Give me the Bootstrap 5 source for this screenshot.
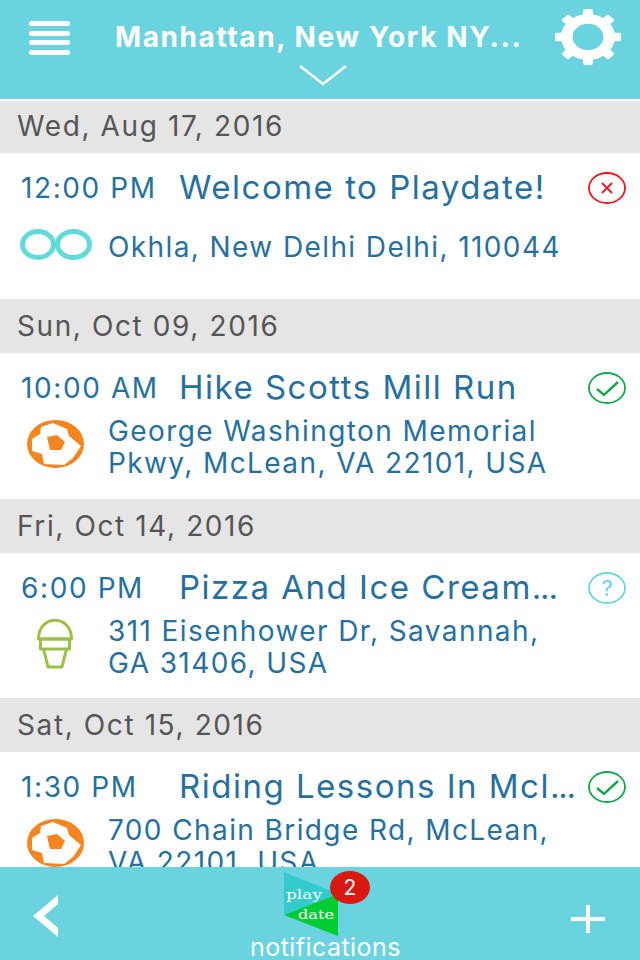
<!DOCTYPE html>
<html lang="en">
  <head>
    <meta charset="UTF-8" />
    <meta name="viewport" content="width=device-width, initial-scale=1.0" />
    <title>Playdate</title>
    <link href="https://cdn.jsdelivr.net/npm/bootstrap@5.3.0/dist/css/bootstrap.min.css" rel="stylesheet" />
    <style>
      body {
        font-family: Inter, "Liberation Sans", Arial, sans-serif;
        background: #fff;
      }
      .app-shell {
        width: 640px;
        height: 960px;
        overflow: hidden;
      }
      .top-bar {
        height: 99px;
        background: #6bd3e0;
        color: #fff;
      }
      .menu-btn {
        width: 115px;
        padding: 21px 0 0 29px;
      }
      .loc-col {
        width: 408px;
      }
      .loc-title {
        font-size: 28px;
        font-weight: 700;
        line-height: 34px;
        letter-spacing: 1.6px;
        margin-top: 20px;
        white-space: nowrap;
      }
      .loc-arrow {
        margin: 11px 0 0 184px;
      }
      .gear-btn {
        padding: 9px 0 0 32px;
      }
      .event-list {
        margin-top: 2px;
        min-height: 0;
      }
      .date-bar {
        height: 54px;
        padding-left: 17px;
        background: #e5e5e5;
        color: #555;
        font-size: 28px;
        line-height: 54px;
        letter-spacing: 1.6px;
      }
      .date-first {
        height: 52px;
        line-height: 50px;
      }
      .event-row {
        height: 146px;
        color: #26709f;
      }
      .event-row-short {
        height: 145px;
      }
      .event-top {
        height: 62px;
        padding-top: 8px;
      }
      .event-time {
        width: 179px;
        padding-left: 21px;
        font-size: 28px;
        letter-spacing: 1.6px;
      }
      .event-title {
        width: 409px;
        font-size: 33px;
        letter-spacing: 1.5px;
        white-space: nowrap;
      }
      .dots-tight {
        letter-spacing: -1.2px;
      }
      .event-place {
        height: 64px;
      }
      .kind-icon {
        width: 108px;
        margin-bottom: 6px;
      }
      .ball-icon {
        margin-left: 27px;
      }
      .loop-icon {
        margin-left: 20px;
      }
      .cone-icon {
        margin-left: 37px;
      }
      .place-text {
        font-size: 28px;
        line-height: 32px;
        letter-spacing: 1.4px;
      }
      .bottom-bar {
        height: 93px;
        background: #6bd3e0;
        color: #fff;
      }
      .back-btn {
        padding: 28px 0 0 33px;
        width: 243px;
      }
      .notif-col {
        width: 230px;
      }
      .logo-wrap {
        width: 100px;
        height: 64px;
        margin: 5px 0 0 41px;
      }
      .notif-badge {
        position: absolute;
        left: 46px;
        top: -1px;
        width: 40px;
        height: 33px;
        border-radius: 50%;
        background: #d9190f;
        font-size: 21px;
        line-height: 33px;
        text-align: center;
      }
      .notif-label {
        font-size: 25px;
        line-height: 22px;
        letter-spacing: 0.45px;
        margin-left: 7px;
      }
      .add-btn {
        padding: 38px 0 0 98px;
      }
      .logo-word {
        font-family: "DejaVu Serif", "Liberation Serif", serif;
        font-size: 13px;
        fill: #fff;
      }
      .status-mark {
        font-size: 22px;
      }
    </style>
  </head>
  <body>
    <div class="app-shell d-flex flex-column">
      <div class="top-bar d-flex flex-shrink-0">
        <div class="menu-btn">
          <svg width="41" height="34" viewBox="0 0 41 34" class="d-block">
            <g fill="#fff"><rect y="0" width="41" height="5" rx="2.5"/><rect y="10" width="41" height="5" rx="2.5"/><rect y="19" width="41" height="5" rx="2.5"/><rect y="29" width="41" height="5" rx="2.5"/></g>
          </svg>
        </div>
        <div class="loc-col">
          <div class="loc-title">Manhattan, New York NY...</div>
          <svg class="loc-arrow d-block" width="48" height="21" viewBox="0 0 48 21"><path d="M1 1 L24 19 L47 1" fill="none" stroke="#fff" stroke-width="2.4"/></svg>
        </div>
        <div class="gear-btn">
          <svg width="66" height="56" viewBox="0 0 66 66" preserveAspectRatio="none" class="d-block">
            <g fill="#fff" transform="translate(33 33)">
              <circle r="27"/>
              <rect x="-5" y="-33" width="10" height="66" rx="2"/>
              <rect x="-5" y="-33" width="10" height="66" rx="2" transform="rotate(45)"/>
              <rect x="-5" y="-33" width="10" height="66" rx="2" transform="rotate(90)"/>
              <rect x="-5" y="-33" width="10" height="66" rx="2" transform="rotate(135)"/>
            </g>
            <circle cx="33" cy="33" r="15.500" fill="#6bd3e0"/>
          </svg>
        </div>
      </div>

      <div class="event-list flex-grow-1 overflow-hidden">
        <div class="date-bar date-first">Wed, Aug 17, 2016</div>
        <div class="event-row">
          <div class="event-top d-flex align-items-center">
            <div class="event-time">12:00 PM</div>
            <div class="event-title">Welcome to Playdate!</div>
            <svg width="40" height="34" viewBox="0 0 40 34"><ellipse cx="19" cy="17" rx="18" ry="15" fill="none" stroke="#f5141c" stroke-width="1.8"/><path d="M14 12 L24 22 M24 12 L14 22" stroke="#f5141c" stroke-width="1.8"/></svg>
          </div>
          <div class="event-place d-flex align-items-center">
            <div class="kind-icon">
              <svg width="72" height="33" viewBox="0 0 72 33" class="d-block loop-icon"><g fill="none" stroke="#62d9da" stroke-width="5"><ellipse cx="18" cy="16.500" rx="15.500" ry="13"/><ellipse cx="53.500" cy="16.500" rx="16" ry="13"/></g></svg>
            </div>
            <div class="place-text">Okhla, New Delhi Delhi, 110044</div>
          </div>
        </div>

        <div class="date-bar">Sun, Oct 09, 2016</div>
        <div class="event-row">
          <div class="event-top d-flex align-items-center">
            <div class="event-time">10:00 AM</div>
            <div class="event-title">Hike Scotts Mill Run</div>
            <svg width="40" height="34" viewBox="0 0 40 34"><ellipse cx="19" cy="17" rx="18" ry="15" fill="none" stroke="#12a84a" stroke-width="1.8"/><path d="M9 18 L16 24 L30 11" fill="none" stroke="#12a84a" stroke-width="2.4"/></svg>
          </div>
          <div class="event-place d-flex align-items-center">
            <div class="kind-icon">
              <svg width="57" height="48" viewBox="0 0 57 48" class="d-block ball-icon">
                <ellipse cx="28.500" cy="24" rx="28.500" ry="24" fill="#f6841f"/>
                <polygon fill="#fff" points="14,7 26,3 40,9 42,16 54,26 46,38 37,45 17,44 15,34 5,31 5,19 13,14"/>
                <polygon fill="#f6841f" points="20,17 30,15 38,22 34,30 23,30"/>
              </svg>
            </div>
            <div class="place-text">George Washington Memorial<br />Pkwy, McLean, VA 22101, USA</div>
          </div>
        </div>

        <div class="date-bar">Fri, Oct 14, 2016</div>
        <div class="event-row event-row-short">
          <div class="event-top d-flex align-items-center">
            <div class="event-time">6:00 PM</div>
            <div class="event-title">Pizza And Ice Cream<span class="dots-tight">...</span></div>
            <svg width="40" height="34" viewBox="0 0 40 34"><ellipse cx="19" cy="17" rx="18" ry="15" fill="none" stroke="#6bd3e0" stroke-width="1.8"/><text class="status-mark" x="19" y="25" text-anchor="middle" fill="#6bd3e0">?</text></svg>
          </div>
          <div class="event-place d-flex align-items-center">
            <div class="kind-icon">
              <svg width="36" height="50" viewBox="0 0 36 50" class="d-block cone-icon">
                <g fill="none" stroke="#9cbf45" stroke-width="3" stroke-linejoin="round">
                  <path d="M1.500 20 C1.500 -5 34.500 -5 34.500 20 Z"/>
                  <rect x="3.500" y="20" width="29" height="10"/>
                  <path d="M6.500 30 L11 48 L25 48 L29.500 30"/>
                </g>
              </svg>
            </div>
            <div class="place-text">311 Eisenhower Dr, Savannah,<br />GA 31406, USA</div>
          </div>
        </div>

        <div class="date-bar">Sat, Oct 15, 2016</div>
        <div class="event-row">
          <div class="event-top d-flex align-items-center">
            <div class="event-time">1:30 PM</div>
            <div class="event-title">Riding Lessons In Mcl<span class="dots-tight">...</span></div>
            <svg width="40" height="34" viewBox="0 0 40 34"><ellipse cx="19" cy="17" rx="18" ry="15" fill="none" stroke="#12a84a" stroke-width="1.8"/><path d="M9 18 L16 24 L30 11" fill="none" stroke="#12a84a" stroke-width="2.4"/></svg>
          </div>
          <div class="event-place d-flex align-items-center">
            <div class="kind-icon">
              <svg width="57" height="48" viewBox="0 0 57 48" class="d-block ball-icon">
                <ellipse cx="28.500" cy="24" rx="28.500" ry="24" fill="#f6841f"/>
                <polygon fill="#fff" points="14,7 26,3 40,9 42,16 54,26 46,38 37,45 17,44 15,34 5,31 5,19 13,14"/>
                <polygon fill="#f6841f" points="20,17 30,15 38,22 34,30 23,30"/>
              </svg>
            </div>
            <div class="place-text">700 Chain Bridge Rd, McLean,<br />VA 22101, USA</div>
          </div>
        </div>
      </div>

      <div class="bottom-bar d-flex flex-shrink-0">
        <div class="back-btn">
          <svg width="25" height="42" viewBox="0 0 25 42" class="d-block"><polygon fill="#fff" points="25,0 25,9 11,21 25,33 25,42 0,21"/></svg>
        </div>
        <div class="notif-col">
          <div class="logo-wrap position-relative">
            <svg width="54" height="64" viewBox="0 0 54 64" class="d-block">
              <polygon fill="#33cccc" points="0,0 54,22 0,43"/>
              <polygon fill="#00cc33" points="0,43 54,22 54,64"/>
              <text class="logo-word" x="2" y="27" textLength="36" lengthAdjust="spacingAndGlyphs">play</text>
              <text class="logo-word" x="14" y="47" textLength="36" lengthAdjust="spacingAndGlyphs">date</text>
            </svg>
            <div class="notif-badge">2</div>
          </div>
          <div class="notif-label">notifications</div>
        </div>
        <div class="add-btn">
          <svg width="34" height="28" viewBox="0 0 34 28" class="d-block"><path d="M0 12 H34 V16 H0 Z M15 0 H19 V28 H15 Z" fill="#fff"/></svg>
        </div>
      </div>
    </div>
    <script src="https://cdn.jsdelivr.net/npm/bootstrap@5.3.0/dist/js/bootstrap.bundle.min.js"></script>
  </body>
</html>
